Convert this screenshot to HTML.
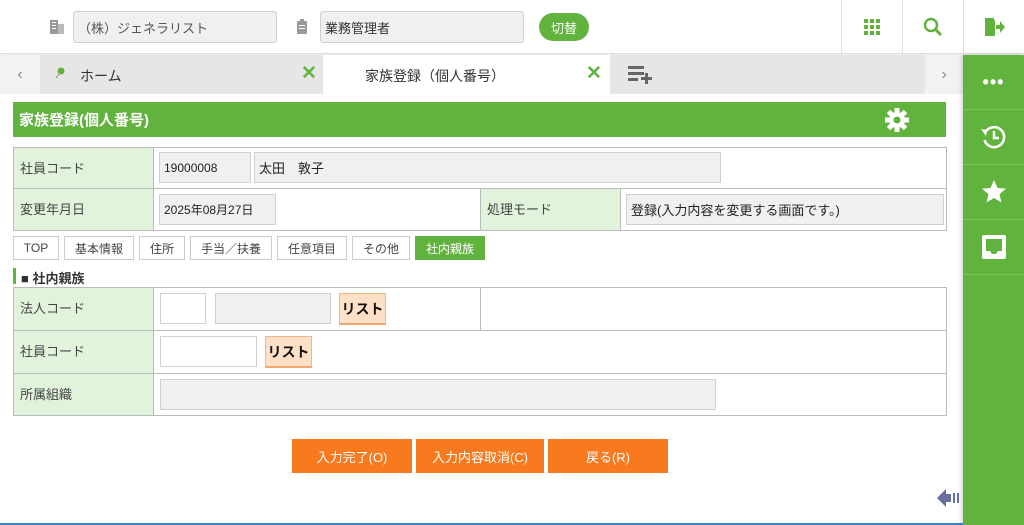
<!DOCTYPE html>
<html><head><meta charset="utf-8"><style>
*{box-sizing:border-box;margin:0;padding:0}
body{width:1024px;height:525px;overflow:hidden;background:#fff;font-family:"Liberation Sans","Noto Sans CJK JP",sans-serif;font-size:13px;color:#333;position:relative}
.a{position:absolute}
.inp{position:absolute;background:#f0f0f0;border:1px solid #d0d0d0;font-size:12px;color:#222;padding-left:4px;display:flex;align-items:center}
.w{background:#fff}
.lab{position:absolute;background:#e2f3dc;border-right:1px solid #bbb;font-size:13px;color:#444;padding:10px 0 0 6px}
.tab{position:absolute;top:236px;height:24px;border:1px solid #ccc;background:#fff;font-size:12px;color:#444;display:flex;align-items:center;justify-content:center}
.list{position:absolute;background:#fde0c6;border:1px solid #f0b88a;border-bottom:2px solid #f0a870;font-weight:bold;font-size:14px;color:#111;display:flex;align-items:center;justify-content:center}
.btn{position:absolute;top:439px;height:34px;background:#f97a1e;color:#fff;font-size:13px;display:flex;align-items:center;justify-content:center}
.sb{position:absolute;left:963px;width:61px;height:55px;border-bottom:1px solid #7cc25c;display:flex;align-items:center;justify-content:center}
</style></head><body>
<!-- top bar -->
<div class="a" style="left:0;top:0;width:1024px;height:54px;border-bottom:1px solid #ddd;box-shadow:0 1px 3px rgba(0,0,0,.12)"></div>
<svg class="a" style="left:49px;top:19px" width="16" height="16"><rect x="1" y="1" width="8" height="14" fill="#999"/><rect x="9" y="5" width="6" height="10" fill="#bbb"/><g fill="#fff"><rect x="3" y="3" width="4" height="1"/><rect x="3" y="6" width="4" height="1"/><rect x="3" y="9" width="4" height="1"/></g></svg>
<div class="inp" style="left:73px;top:11px;width:204px;height:32px;font-size:13px;border-radius:3px;color:#555">（株）ジェネラリスト</div>
<svg class="a" style="left:296px;top:19px" width="12" height="16"><rect x="1" y="2" width="10" height="13" rx="1" fill="#999"/><rect x="4" y="0" width="4" height="3" fill="#999"/><g fill="#fff"><rect x="3" y="6" width="6" height="1"/><rect x="3" y="9" width="6" height="1"/></g></svg>
<div class="inp" style="left:320px;top:11px;width:204px;height:32px;font-size:13px;border-radius:3px;color:#333">業務管理者</div>
<div class="a" style="left:539px;top:13px;width:50px;height:28px;border-radius:14px;background:#62b33e;color:#fff;font-size:13px;display:flex;align-items:center;justify-content:center">切替</div>
<div class="a" style="left:841px;top:0;width:1px;height:54px;background:#ddd"></div>
<div class="a" style="left:902px;top:0;width:1px;height:54px;background:#ddd"></div>
<div class="a" style="left:963px;top:0;width:1px;height:54px;background:#ddd"></div>
<svg class="a" style="left:864px;top:19px" width="16" height="16" fill="#62b33e"><rect x="0" y="0" width="4" height="4"/><rect x="6" y="0" width="4" height="4"/><rect x="12" y="0" width="4" height="4"/><rect x="0" y="6" width="4" height="4"/><rect x="6" y="6" width="4" height="4"/><rect x="12" y="6" width="4" height="4"/><rect x="0" y="12" width="4" height="4"/><rect x="6" y="12" width="4" height="4"/><rect x="12" y="12" width="4" height="4"/></svg>
<svg class="a" style="left:923px;top:17px" width="20" height="20"><circle cx="8" cy="8" r="6" fill="none" stroke="#62b33e" stroke-width="2.5"/><path d="M12 12l6 6" stroke="#62b33e" stroke-width="3"/></svg>
<svg class="a" style="left:983px;top:16px" width="22" height="22" fill="#62b33e"><path d="M2 2h9v3H5v12h6v3H2z"/><path d="M5 2l7 2v16l-7-2z"/><path d="M13 9h4V5l5 6-5 6v-4h-4z"/></svg>
<!-- tabs row -->
<div class="a" style="left:0;top:55px;width:963px;height:39px;background:#e6e6e6"></div>
<div class="a" style="left:0;top:55px;width:40px;height:39px;background:#f2f2f2;color:#888;font-size:16px;text-align:center;line-height:39px">‹</div>
<div class="a" style="left:925px;top:55px;width:38px;height:39px;background:#f2f2f2;color:#888;font-size:16px;text-align:center;line-height:39px">›</div>
<svg class="a" style="left:55px;top:67px" width="10" height="12"><circle cx="6" cy="4" r="3.5" fill="#62b33e"/><path d="M5 6L1 11" stroke="#9a7" stroke-width="1.3"/></svg>
<div class="a" style="left:80px;top:66px;font-size:14px;color:#333">ホーム</div>
<div class="a" style="left:301px;top:62px;font-size:19px;color:#62b33e;font-weight:bold">✕</div>
<div class="a" style="left:323px;top:55px;width:287px;height:39px;background:#fff"></div>
<div class="a" style="left:365px;top:66px;font-size:14px;color:#333">家族登録（個人番号）</div>
<div class="a" style="left:586px;top:62px;font-size:19px;color:#62b33e;font-weight:bold">✕</div>
<svg class="a" style="left:628px;top:66px" width="26" height="18" fill="#666"><rect x="0" y="0" width="16" height="3"/><rect x="0" y="6" width="16" height="3"/><rect x="0" y="12" width="10" height="3"/><rect x="13" y="11" width="11" height="3"/><rect x="17" y="7" width="3" height="11"/></svg>
<!-- sidebar -->
<div class="a" style="left:963px;top:55px;width:61px;height:470px;background:#62b33e;box-shadow:-2px 0 4px rgba(0,0,0,.15)"></div>
<div class="sb" style="top:55px;color:#fff;font-size:18px;font-weight:bold;letter-spacing:1px">•••</div>
<div class="sb" style="top:110px"><svg width="28" height="28"><path d="M5 10A10 10 0 1 1 4.5 17" fill="none" stroke="#fff" stroke-width="2.5"/><path d="M1 6l6 1-1 6z" fill="#fff"/><path d="M14 8v7h5" fill="none" stroke="#fff" stroke-width="2.5"/></svg></div>
<div class="sb" style="top:165px"><svg width="26" height="26"><path d="M13 1l3.5 8 8.5.6-6.5 5.6 2 8.3L13 19l-7.5 4.5 2-8.3L1 9.6l8.5-.6z" fill="#fff"/></svg></div>
<div class="sb" style="top:220px"><svg width="26" height="26"><path d="M3 1h20a2 2 0 0 1 2 2v20a2 2 0 0 1-2 2H3a2 2 0 0 1-2-2V3a2 2 0 0 1 2-2zm2 4v12h4l2 3h4l2-3h4V5z" fill="#fff"/></svg></div>
<!-- header -->
<div class="a" style="left:13px;top:102px;width:933px;height:35px;background:#62b33e;color:#fff;font-weight:bold;font-size:15px;padding:7px 0 0 6px">家族登録(個人番号)</div>
<svg class="a" style="left:885px;top:108px" width="24" height="24"><g fill="#fff"><circle cx="12" cy="12" r="8"/><g id="t"><rect x="9.5" y="0" width="5" height="5"/><rect x="9.5" y="19" width="5" height="5"/></g><use href="#t" transform="rotate(45 12 12)"/><use href="#t" transform="rotate(90 12 12)"/><use href="#t" transform="rotate(135 12 12)"/></g><circle cx="12" cy="12" r="3.5" fill="#62b33e"/></svg>
<!-- table 1 -->
<div class="a" style="left:13px;top:147px;width:934px;height:84px;border:1px solid #bbb"></div>
<div class="a" style="left:13px;top:188px;width:934px;height:1px;background:#bbb"></div>
<div class="lab" style="left:14px;top:148px;width:140px;height:40px">社員コード</div>
<div class="lab" style="left:14px;top:189px;width:140px;height:41px">変更年月日</div>
<div class="inp" style="left:159px;top:152px;width:92px;height:31px">19000008</div>
<div class="inp" style="left:254px;top:152px;width:467px;height:31px;font-size:13px">太田　敦子</div>
<div class="inp" style="left:159px;top:194px;width:117px;height:31px">2025年08月27日</div>
<div class="lab" style="left:480px;top:189px;width:141px;height:41px;border-left:1px solid #bbb">処理モード</div>
<div class="inp" style="left:626px;top:194px;width:318px;height:31px;font-size:13px">登録(入力内容を変更する画面です。)</div>
<!-- tabs -->
<div class="tab" style="left:13px;width:46px">TOP</div>
<div class="tab" style="left:64px;width:70px">基本情報</div>
<div class="tab" style="left:139px;width:46px">住所</div>
<div class="tab" style="left:190px;width:82px">手当／扶養</div>
<div class="tab" style="left:277px;width:70px">任意項目</div>
<div class="tab" style="left:352px;width:58px">その他</div>
<div class="tab" style="left:415px;width:70px;background:#62b33e;color:#fff;border-color:#62b33e">社内親族</div>
<!-- section -->
<div class="a" style="left:13px;top:268px;width:3px;height:16px;background:#62b33e"></div>
<div class="a" style="left:21px;top:268px;font-size:13px;font-weight:bold;color:#333">■ 社内親族</div>
<div class="a" style="left:13px;top:287px;width:934px;height:129px;border:1px solid #bbb"></div>
<div class="a" style="left:13px;top:330px;width:934px;height:1px;background:#bbb"></div>
<div class="a" style="left:13px;top:373px;width:934px;height:1px;background:#bbb"></div>
<div class="lab" style="left:14px;top:288px;width:140px;height:42px">法人コード</div>
<div class="lab" style="left:14px;top:331px;width:140px;height:42px">社員コード</div>
<div class="lab" style="left:14px;top:374px;width:140px;height:41px">所属組織</div>
<div class="a" style="left:480px;top:288px;width:1px;height:42px;background:#bbb"></div>
<div class="inp w" style="left:160px;top:293px;width:46px;height:31px"></div>
<div class="inp" style="left:215px;top:293px;width:116px;height:31px"></div>
<div class="list" style="left:339px;top:293px;width:47px;height:32px">リスト</div>
<div class="inp w" style="left:160px;top:336px;width:97px;height:31px"></div>
<div class="list" style="left:265px;top:336px;width:47px;height:32px">リスト</div>
<div class="inp" style="left:160px;top:379px;width:556px;height:31px"></div>
<!-- buttons -->
<div class="btn" style="left:292px;width:120px">入力完了(O)</div>
<div class="btn" style="left:416px;width:128px">入力内容取消(C)</div>
<div class="btn" style="left:548px;width:120px">戻る(R)</div>
<svg class="a" style="left:937px;top:487px" width="26" height="22"><path d="M0 11l9-9v5h5v8H9v5z" fill="#6a6fa0"/><rect x="16" y="6" width="2" height="10" fill="#6a6fa0"/><rect x="20" y="6" width="2" height="10" fill="#6a6fa0"/></svg>
<div class="a" style="left:0;top:523px;width:963px;height:2px;background:#3b7fc4"></div>
</body></html>
